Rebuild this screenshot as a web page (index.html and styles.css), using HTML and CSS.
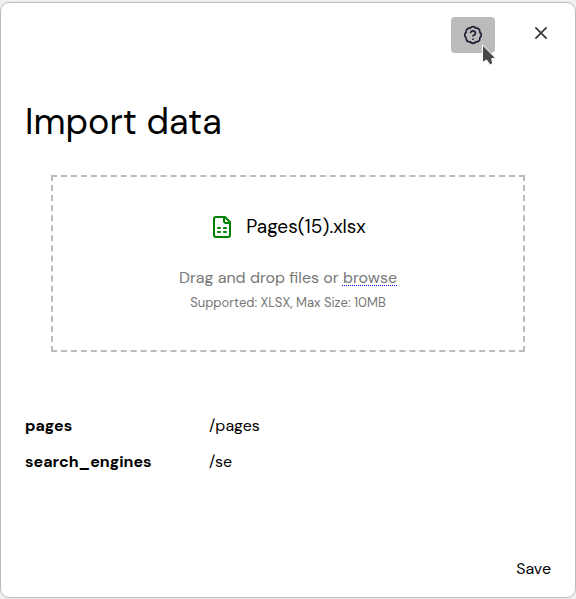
FILE: index.html
```html
<!DOCTYPE html>
<html lang="en">
<head>
<meta charset="utf-8">
<meta name="viewport" content="width=device-width, initial-scale=1">
<title>Import data</title>
<link rel="stylesheet" href="styles.css">
</head>
<body>
<main class="dialog" role="dialog" aria-labelledby="dialog-title">
  <header class="toolbar">
    <button class="help" type="button" aria-label="Help">
      <svg class="icon" width="20" height="20" viewBox="0 0 24 24" fill="none" stroke="currentColor" stroke-width="2" stroke-linecap="round" stroke-linejoin="round" aria-hidden="true">
        <path d="M3.85 8.62a4 4 0 0 1 4.78-4.77 4 4 0 0 1 6.74 0 4 4 0 0 1 4.78 4.78 4 4 0 0 1 0 6.74 4 4 0 0 1-4.77 4.78 4 4 0 0 1-6.75 0 4 4 0 0 1-4.78-4.77 4 4 0 0 1 0-6.76Z"/>
        <path d="M9.09 9a3 3 0 0 1 5.83 1c0 2-3 3-3 3"/>
        <path d="M12 17h.01"/>
      </svg>
      <svg class="pointer" width="16" height="23" viewBox="0 0 16 23" aria-hidden="true">
        <path d="M1.5 1V18.5l4-2.6 3.6 5 2.6-1.6-1-4.6 3.8-.8Z" fill="#484848" stroke="#fff" stroke-width="1"/>
      </svg>
    </button>
    <button class="close" type="button" aria-label="Close">
      <svg class="icon" width="20" height="20" viewBox="0 0 20 20" fill="none" stroke="currentColor" stroke-width="1.6" aria-hidden="true">
        <path d="M4.4 4.4l11.2 11.2M15.6 4.4L4.4 15.6"/>
      </svg>
    </button>
  </header>
  <h1 class="title" id="dialog-title">Import data</h1>
  <section class="dropzone">
    <div class="file">
      <svg class="file-icon" width="24" height="24" viewBox="0 0 24 24" fill="none" stroke="currentColor" stroke-width="2" stroke-linecap="round" stroke-linejoin="round" aria-hidden="true">
        <path d="M15 2H6a2 2 0 0 0-2 2v16a2 2 0 0 0 2 2h12a2 2 0 0 0 2-2V7Z"/>
        <path d="M14 2v4a2 2 0 0 0 2 2h4"/>
        <path d="M8 13h2M14 13h2M8 17h2M14 17h2"/>
      </svg>
      <span>Pages(15).xlsx</span>
    </div>
    <p class="hint">Drag and drop files or <a class="browse" href="#">browse</a></p>
    <p class="limits">Supported: XLSX, Max Size: 10MB</p>
  </section>
  <table class="sheets">
    <tbody>
      <tr><th scope="row">pages</th><td>/pages</td></tr>
      <tr><th scope="row">search_engines</th><td>/se</td></tr>
    </tbody>
  </table>
  <footer class="actions">
    <button class="save" type="button">Save</button>
  </footer>
</main>
</body>
</html>
```
FILE: styles.css
```css
* {
  box-sizing: border-box;
}

body {
  margin: 0;
  padding: 2px 0 1px;
  background: #efefef;
  color: #000;
  font: 16px/24px "DM Sans", Inter, sans-serif;
}

button {
  padding: 0;
  border: 0;
  background: none;
  color: inherit;
  font: inherit;
}

.dialog {
  display: flex;
  flex-direction: column;
  min-height: calc(100vh - 3px);
  padding: 14px 24px 16px;
  border: 1px solid #bbb;
  border-radius: 9px;
  background: #fff;
}

.toolbar {
  display: flex;
  justify-content: flex-end;
  gap: 36px;
}

.help {
  position: relative;
  display: grid;
  place-items: center;
  width: 44px;
  height: 36px;
  border-radius: 4px;
  background: #bbb;
  color: #1f1b33;
}

.pointer {
  position: absolute;
  top: 27px;
  left: 30px;
}

.close {
  width: 20px;
  height: 32px;
  color: #333;
}

.icon {
  display: block;
}

.title {
  margin: 44px 0 28px;
  font-size: 36px;
  font-weight: 400;
  line-height: 50px;
}

.dropzone {
  margin: 0 26px;
  padding: 34px 16px 35px;
  border: 2px dashed #bbb;
  color: #777;
  text-align: center;
}

.file {
  display: flex;
  align-items: center;
  justify-content: center;
  gap: 12px;
  margin-bottom: 22px;
  color: #000;
  font-size: 19px;
  line-height: 32px;
}

.file-icon {
  color: #008000;
}

.hint,
.limits {
  margin: 0;
}

.hint {
  line-height: 26px;
}

.limits {
  font-size: 13px;
}

.browse {
  color: inherit;
  text-decoration: underline dotted 1px #0000ee;
  text-underline-offset: 2px;
}

.sheets {
  width: 100%;
  margin-top: 56px;
  border-collapse: collapse;
  table-layout: fixed;
}

.sheets th,
.sheets td {
  padding: 6px 0;
  text-align: left;
}

.sheets th {
  width: 35%;
}

.actions {
  display: flex;
  justify-content: flex-end;
  margin-top: auto;
}
```
